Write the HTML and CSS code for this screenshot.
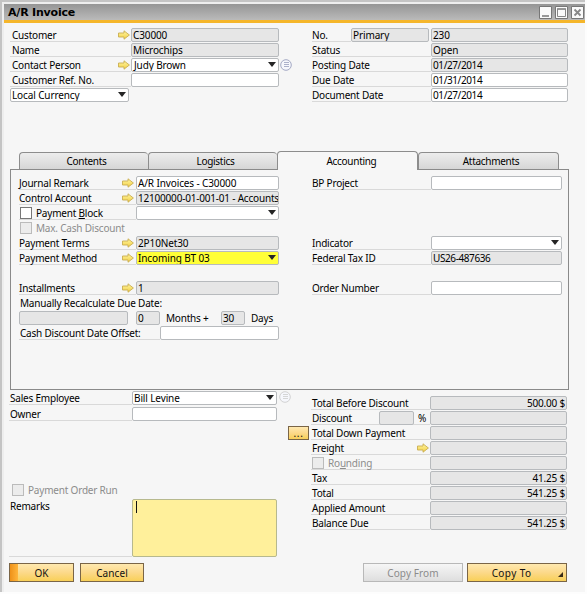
FILE: index.html
```
<!DOCTYPE html>
<html lang="en">
<head>
<meta charset="utf-8">
<title>A/R Invoice</title>
<link rel="stylesheet" href="styles.css">
</head>
<body>
<svg class="defs" width="0" height="0">
  <defs>
    <linearGradient id="gold" x1="0" y1="0" x2="0" y2="1"><stop offset="0" stop-color="#fff5a0"/><stop offset="1" stop-color="#f2cf45"/></linearGradient>
    <symbol id="arrow" viewBox="0 0 12 10"><path d="M.5 3H6V.8L11.4 5 6 9.2V7H.5Z" fill="url(#gold)" stroke="#c9ae51" stroke-width=".9"/></symbol>
    <symbol id="list" viewBox="0 0 12 12"><circle cx="6" cy="6" r="5.3" fill="#f6f7fc" stroke="currentColor"/><path d="M3.5 3.5H8.5M3.5 5.5H8.5M3.5 7.5H8.5" stroke="currentColor" stroke-width=".9" shape-rendering="crispEdges"/></symbol>
  </defs>
</svg>
<main class="window">
  <header class="titlebar">
    <h1>A/R Invoice</h1>
    <div class="controls">
      <svg width="13" height="13" viewBox="0 0 13 13"><path d="M.5.5H12.5V12.5H.5Z" fill="#fafafa" stroke="#777"/><path d="M3 10H10" stroke="#777" stroke-width="1.5"/></svg>
      <svg width="13" height="13" viewBox="0 0 13 13"><path d="M.5.5H12.5V12.5H.5Z" fill="#fafafa" stroke="#777"/><path d="M2.5 3H10.5V10.5H2.5Z" fill="none" stroke="#888"/><path d="M2 3H11" stroke="#888" stroke-width="1.5"/></svg>
      <svg width="13" height="13" viewBox="0 0 13 13"><path d="M.5.5H12.5V12.5H.5Z" fill="#fafafa" stroke="#777"/><path d="M3.5 3.5L9.5 9.5M9.5 3.5L3.5 9.5" stroke="#888" stroke-width="1.8"/></svg>
    </div>
  </header>

  <section class="head">
    <div class="col head-left">
      <div class="row"><div class="label">Customer<svg class="arrow"><use href="#arrow"/></svg></div><div class="field ro">C30000</div></div>
      <div class="row"><div class="label">Name</div><div class="field ro">Microchips</div></div>
      <div class="row"><div class="label">Contact Person<svg class="arrow"><use href="#arrow"/></svg></div><div class="field select person">Judy Brown</div><svg class="list"><use href="#list"/></svg></div>
      <div class="row"><div class="label">Customer Ref. No.</div><div class="field"></div></div>
      <div class="row"><div class="field select currency">Local Currency</div></div>
    </div>
    <div class="col head-right">
      <div class="row"><div class="label number">No.</div><div class="field ro series">Primary</div><div class="field ro">230</div></div>
      <div class="row"><div class="label">Status</div><div class="field ro">Open</div></div>
      <div class="row"><div class="label">Posting Date</div><div class="field ro date">01/27/2014</div></div>
      <div class="row"><div class="label">Due Date</div><div class="field date">01/31/2014</div></div>
      <div class="row"><div class="label">Document Date</div><div class="field date">01/27/2014</div></div>
    </div>
  </section>

  <nav class="tabs">
    <div class="tab">Contents</div><div class="tab">Logistics</div><div class="tab active">Accounting</div><div class="tab">Attachments</div>
  </nav>

  <section class="panel">
    <div class="col panel-left">
      <div class="row"><div class="label">Journal Remark<svg class="arrow"><use href="#arrow"/></svg></div><div class="field">A/R Invoices - C30000</div></div>
      <div class="row"><div class="label">Control Account<svg class="arrow"><use href="#arrow"/></svg></div><div class="field ro tight">12100000-01-001-01 - Accounts</div></div>
      <div class="row"><div class="label"><i class="check"></i><span>Payment <u>B</u>lock</span></div><div class="field select"></div></div>
      <div class="row"><div class="label plain muted"><i class="check off"></i>Max. Cash Discount</div></div>
      <div class="row"><div class="label">Payment Terms<svg class="arrow"><use href="#arrow"/></svg></div><div class="field ro">2P10Net30</div></div>
      <div class="row"><div class="label">Payment Method<svg class="arrow"><use href="#arrow"/></svg></div><div class="field select yellow">Incoming BT 03</div></div>
      <div class="row"></div>
      <div class="row"><div class="label">Installments<svg class="arrow"><use href="#arrow"/></svg></div><div class="field ro">1</div></div>
      <div class="row"><div class="label plain indent">Manually Recalculate Due Date:</div></div>
      <div class="row recalc"><div class="field ro"></div><div class="field ro">0</div><span>Months +</span><div class="field ro">30</div><span>Days</span></div>
      <div class="row offset"><div class="label indent">Cash Discount Date Offset:</div><div class="field"></div></div>
    </div>
    <div class="col panel-right">
      <div class="row"><div class="label">BP Project</div><div class="field"></div></div>
      <div class="row"></div><div class="row"></div><div class="row"></div>
      <div class="row"><div class="label">Indicator</div><div class="field select"></div></div>
      <div class="row"><div class="label">Federal Tax ID</div><div class="field ro date">US26-487636</div></div>
      <div class="row"></div>
      <div class="row"><div class="label">Order Number</div><div class="field"></div></div>
    </div>
  </section>

  <section class="foot">
    <div class="col foot-left">
      <div class="row employee"><div class="label">Sales Employee</div><div class="field select">Bill Levine</div><svg class="list faint"><use href="#list"/></svg></div>
      <div class="row owner"><div class="label">Owner</div><div class="field"></div></div>
      <div class="row run"><div class="label plain muted"><i class="check off"></i>Payment Order Run</div></div>
      <div class="row remarks"><div class="label">Remarks</div><div class="memo"><i class="caret"></i></div></div>
    </div>
    <div class="col totals">
      <div class="row"><div class="label">Total Before Discount</div><div class="field ro">500.00 $</div></div>
      <div class="row"><div class="label">Discount<div class="field ro percent"></div><span>%</span></div><div class="field ro"></div></div>
      <div class="row"><button class="btn more">...</button><div class="label">Total Down Payment</div><div class="field ro"></div></div>
      <div class="row"><div class="label">Freight<svg class="arrow"><use href="#arrow"/></svg></div><div class="field ro"></div></div>
      <div class="row"><div class="label muted"><i class="check off"></i><span>Ro<u>u</u>nding</span></div><div class="field ro"></div></div>
      <div class="row"><div class="label">Tax</div><div class="field ro">41.25 $</div></div>
      <div class="row"><div class="label">Total</div><div class="field ro">541.25 $</div></div>
      <div class="row"><div class="label">Applied Amount</div><div class="field ro"></div></div>
      <div class="row"><div class="label">Balance Due</div><div class="field ro">541.25 $</div></div>
    </div>
  </section>

  <footer class="actions">
    <button class="btn ok">OK</button><button class="btn cancel">Cancel</button>
    <button class="btn copy-from">Copy From</button><button class="btn copy-to">Copy To<svg class="corner" width="5" height="5"><path d="M5 0V5H0Z" fill="#3a2b17"/></svg></button>
  </footer>
</main>
</body>
</html>
```
FILE: styles.css
```
* { box-sizing: border-box; }
html, body { margin: 0; overflow: hidden; }
body {
  width: 587px; height: 594px; background: #fdfdfd;
  font: 10px/14px "Noto Sans", "Open Sans", sans-serif;
  letter-spacing: -.2px; color: #000;
}
.defs { position: absolute; }
.window {
  width: 585px; height: 592px; background: #f6f6f6;
  border: solid #c4c4c4; border-width: 2px 0 0 2px;
  box-shadow: inset 2px 2px #eee;
  padding: 2px 0 0 2px;
}
.titlebar {
  height: 19px; display: flex; align-items: center; justify-content: space-between;
  padding: 0 1px 0 4px; border-bottom: 3px solid #f5b62b;
  background: linear-gradient(#959595, #bababa);
}
h1 { margin: 0; padding-top: 1px; font: bold 11px/16px "DejaVu Sans", sans-serif; letter-spacing: -.2px; }
.controls { display: flex; gap: 3px; }
.controls svg { display: block; }

.col { display: flex; flex-direction: column; }
.row { display: flex; height: 15px; flex: none; position: relative; }
.label {
  width: 121px; height: 14px; flex: none; display: flex; align-items: center;
  border-bottom: 1px solid #d9d9d9; padding-left: 2px; white-space: nowrap;
}
.label.plain { border-color: transparent; }
.muted { color: #8c8c8c; }
.arrow { width: 12px; height: 10px; margin-left: auto; margin-right: 1px; }
.field {
  flex: 1; height: 14px; border: 1px solid #b7babd; border-radius: 2px;
  background: #fff; padding-left: 1px; line-height: 12px; letter-spacing: -.12px;
  white-space: nowrap; overflow: hidden; position: relative;
}
.ro { background: #e6e6e6; }
.yellow { background: #ffff37; }
.tight { letter-spacing: -.2px; }
.date { letter-spacing: -.4px; }
.person { padding-left: 2px; }
.select::after {
  content: ""; position: absolute; right: 2px; top: 3px;
  border: solid transparent; border-width: 5px 4px 0; border-top-color: #252525;
}
.list { position: absolute; left: 270px; top: 1px; width: 12px; height: 12px; color: #a4a9c4; }
.list.faint { color: #d2d2d2; left: 270px; top: 0; }
.check { width: 12px; height: 12px; border: 1px solid #777; background: #fff; margin-right: 4px; flex: none; }
.check.off { border-color: #bbb; background: #ececec; }

.head { display: flex; height: 128px; padding: 5px 17px 0 6px; }
.head-left { width: 269px; margin-right: 33px; }
.head-right { width: 256px; }
.currency { flex: none; width: 119px; }
.head-right .label, .panel-right .label { width: 119px; padding-left: 0; }
.head-right .label.number { width: 39px; }
.series { flex: none; width: 78px; margin-right: 2px; }

.tabs { display: flex; align-items: flex-end; height: 18px; padding-left: 15px; position: relative; }
.tab {
  width: 129px; height: 17px; line-height: 17px; text-align: center; padding-left: 5px;
  border: 1px solid #8d8d8d; border-right-width: 0; border-bottom: 0; border-radius: 4px 4px 0 0;
  background: linear-gradient(#ededed, #d6d6d6); letter-spacing: -.3px;
}
.tab:last-child { width: 141px; border-right-width: 1px; }
.tab.active { width: 141px; height: 19px; margin-bottom: -1px; border-right-width: 1px; background: #f7f7f7; line-height: 19px; padding-left: 8px; z-index: 1; }
.panel { display: flex; width: 559px; height: 221px; margin-left: 6px; border: 1px solid #8a8a8a; padding: 6px 5px 0 8px; }
.panel-left { width: 260px; margin-right: 33px; }
.panel-left .label { width: 117px; padding-left: 0; }
.panel-left .arrow { margin-right: 2px; }
.panel-left .check { margin: 0 4px 0 1px; }
.panel-left .label.indent { padding-left: 1px; }
.panel-right { width: 250px; }
.recalc .field { flex: none; width: 109px; margin-right: 8px; }
.recalc .field ~ .field { width: 24px; margin-right: 6px; }
.recalc span { width: 55px; }
.recalc span ~ .field { width: 26px; margin-right: 4px; }
.recalc span:last-child { width: auto; }
.panel-left .offset .label { width: 141px; }

.foot { display: flex; height: 173px; padding: 1px 18px 0 5px; }
.foot-left { width: 268px; margin-right: 34px; }
.foot-left .label { width: 123px; padding-left: 1px; }
.employee { height: 16px; }
.owner { height: 76px; }
.run { height: 16px; }
.foot-left .run .label { padding-left: 3px; }
.remarks { height: 59px; }
.remarks .label { height: 58px; align-items: flex-start; }
.memo { flex: 1; height: 58px; background: #fff09b; border: 1px solid #b7b98e; border-radius: 2px; padding: 1px 3px; }
.caret { display: block; width: 1px; height: 12px; background: #111; }
.totals { width: 256px; padding-top: 5px; }
.totals .label { width: 119px; padding-left: 1px; }
.totals .row > .field { text-align: right; padding-right: 1px; letter-spacing: -.2px; }
.percent { flex: none; width: 35px; margin-left: auto; margin-right: 4px; }
.percent + span { width: 12px; }

.btn {
  height: 19px; padding: 0; border: 1px solid #7a6547; border-radius: 0;
  background: linear-gradient(#ffe9b0, #fcd98a 50%, #f8d058); color: #111;
  font: inherit; letter-spacing: .1px; position: relative;
}
.more { position: absolute; left: -23px; top: 0; width: 21px; height: 14px; line-height: 8px; letter-spacing: .7px; }
.actions { display: flex; padding-left: 5px; }
.ok { width: 65px; margin-right: 6px; }
.ok::before { content: ""; position: absolute; left: 0; top: 0; bottom: 0; width: 8px; background: linear-gradient(90deg, #ee9119, #ffb53c); }
.cancel { width: 64px; }
.copy-from { width: 100px; margin: 0 4px 0 219px; color: #8b8b8b; border-color: #b8b8b8; background: linear-gradient(#f6f6f6, #dedede); }
.copy-to { width: 100px; padding-right: 11px; letter-spacing: .4px; }
.corner { position: absolute; right: 3px; bottom: 4px; }
```
